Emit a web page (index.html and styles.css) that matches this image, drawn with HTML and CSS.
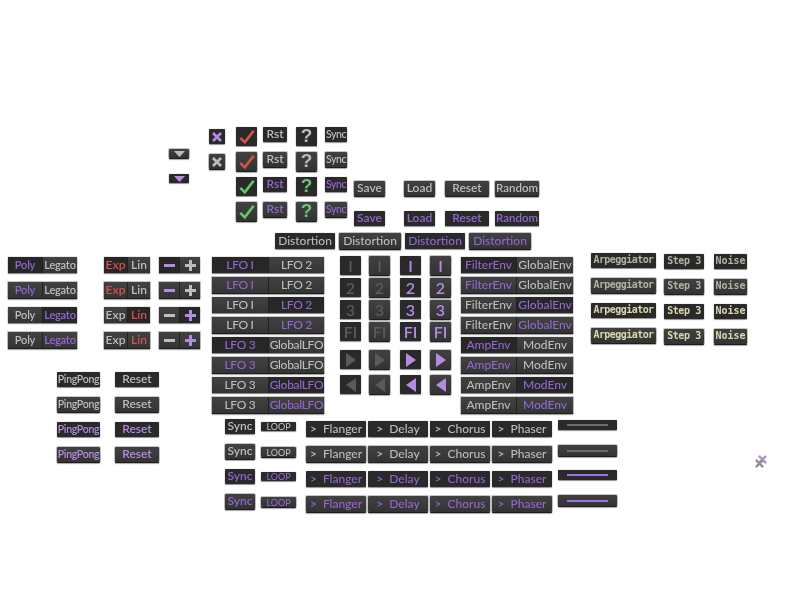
FILE: index.html
```html
<!DOCTYPE html>
<html lang="en">

<head>
    <meta charset="UTF-8">
    <meta name="viewport" content="width=device-width, initial-scale=1.0">
    <title>Synth button sprites</title>
    <link rel="stylesheet" href="styles.css">
</head>

<body>
    <svg class="defs" width="0" height="0">
        <symbol id="tick" viewBox="0 0 20 18"><path d="M2.5 10 L7.5 15 L17.5 2" fill="none" stroke="currentColor" stroke-width="3"/></symbol>
        <symbol id="cross" viewBox="0 0 10 10"><path d="M1 1 L9 9 M9 1 L1 9" fill="none" stroke="currentColor" stroke-width="2.6"/></symbol>
        <symbol id="down" viewBox="0 0 11 6"><path d="M0 0 H11 L5.5 6 Z" fill="currentColor"/></symbol>
        <symbol id="right" viewBox="0 0 10 14"><path d="M0 0 L10 7 L0 14 Z" fill="currentColor"/></symbol>
        <symbol id="left" viewBox="0 0 10 14"><path d="M10 0 L0 7 L10 14 Z" fill="currentColor"/></symbol>
        <symbol id="minus" viewBox="0 0 11 11"><path d="M0 4 H11 V7 H0 Z" fill="currentColor"/></symbol>
        <symbol id="plus" viewBox="0 0 11 11"><path d="M4 0 H7 V4 H11 V7 H7 V11 H4 V7 H0 V4 H4 Z" fill="currentColor"/></symbol>
    </svg>

    <div class="sheet">
        <!-- small drop arrows -->
        <div class="cluster arrows">
            <div class="btn up drop"><svg class="ico-down"><use href="#down"/></svg></div>
            <div class="btn drop pale"><svg class="ico-down"><use href="#down"/></svg></div>
        </div>

        <div class="cluster crosses">
            <div class="btn cross pale"><svg class="ico-cross"><use href="#cross"/></svg></div>
            <div class="btn up cross"><svg class="ico-cross"><use href="#cross"/></svg></div>
        </div>

        <!-- check / rst / help / sync -->
        <div class="cluster checks">
            <div class="btn square red"><svg class="ico-tick"><use href="#tick"/></svg></div>
            <div class="btn rst">Rst</div>
            <div class="btn square help">?</div>
            <div class="btn sync">Sync</div>

            <div class="btn up square red"><svg class="ico-tick"><use href="#tick"/></svg></div>
            <div class="btn up rst">Rst</div>
            <div class="btn up square help">?</div>
            <div class="btn up sync">Sync</div>

            <div class="btn square grn"><svg class="ico-tick"><use href="#tick"/></svg></div>
            <div class="btn rst pur">Rst</div>
            <div class="btn square help grn">?</div>
            <div class="btn sync pur">Sync</div>

            <div class="btn up square grn"><svg class="ico-tick"><use href="#tick"/></svg></div>
            <div class="btn up rst pur">Rst</div>
            <div class="btn up square help grn">?</div>
            <div class="btn up sync pur">Sync</div>
        </div>

        <div class="cluster files">
            <div class="btn up save">Save</div>
            <div class="btn up load">Load</div>
            <div class="btn up reset">Reset</div>
            <div class="btn up random">Random</div>
            <div class="btn save pur">Save</div>
            <div class="btn load pur">Load</div>
            <div class="btn reset pur">Reset</div>
            <div class="btn random pur">Random</div>
        </div>

        <div class="cluster dist">
            <div class="btn long">Distortion</div>
            <div class="btn up long">Distortion</div>
            <div class="btn long pur">Distortion</div>
            <div class="btn up long pur">Distortion</div>
        </div>

        <!-- two part switches -->
        <div class="cluster pairs voice">
            <div class="pair"><div class="part pur">Poly</div><div class="part lit">Legato</div></div>
            <div class="pair up"><div class="part lit pur">Poly</div><div class="part lit">Legato</div></div>
            <div class="pair"><div class="part lit">Poly</div><div class="part pur">Legato</div></div>
            <div class="pair up"><div class="part lit">Poly</div><div class="part lit pur">Legato</div></div>
        </div>

        <div class="cluster pairs curve">
            <div class="pair"><div class="part red">Exp</div><div class="part lit">Lin</div></div>
            <div class="pair up"><div class="part lit red">Exp</div><div class="part lit">Lin</div></div>
            <div class="pair"><div class="part lit">Exp</div><div class="part red">Lin</div></div>
            <div class="pair up"><div class="part lit">Exp</div><div class="part lit red">Lin</div></div>
        </div>

        <div class="cluster pairs steps">
            <div class="pair"><div class="part pale"><svg class="ico-sign"><use href="#minus"/></svg></div><div class="part lit"><svg class="ico-sign"><use href="#plus"/></svg></div></div>
            <div class="pair up"><div class="part lit pale"><svg class="ico-sign"><use href="#minus"/></svg></div><div class="part lit"><svg class="ico-sign"><use href="#plus"/></svg></div></div>
            <div class="pair"><div class="part lit"><svg class="ico-sign"><use href="#minus"/></svg></div><div class="part pale"><svg class="ico-sign"><use href="#plus"/></svg></div></div>
            <div class="pair up"><div class="part lit"><svg class="ico-sign"><use href="#minus"/></svg></div><div class="part lit pale"><svg class="ico-sign"><use href="#plus"/></svg></div></div>
        </div>

        <div class="cluster ping">
            <div class="btn pingpong">PingPong</div>
            <div class="btn reset">Reset</div>
            <div class="btn up pingpong">PingPong</div>
            <div class="btn up reset">Reset</div>
            <div class="btn pingpong pale">PingPong</div>
            <div class="btn reset pale">Reset</div>
            <div class="btn up pingpong pale">PingPong</div>
            <div class="btn up reset pale">Reset</div>
        </div>

        <div class="cluster pairs lfo">
            <div class="pair"><div class="part pur">LFO I</div><div class="part lit">LFO 2</div></div>
            <div class="pair up"><div class="part lit pur">LFO I</div><div class="part lit">LFO 2</div></div>
            <div class="pair"><div class="part lit">LFO I</div><div class="part pur">LFO 2</div></div>
            <div class="pair up"><div class="part lit">LFO I</div><div class="part lit pur">LFO 2</div></div>
            <div class="pair"><div class="part pur">LFO 3</div><div class="part lit">GlobalLFO</div></div>
            <div class="pair up"><div class="part lit pur">LFO 3</div><div class="part lit">GlobalLFO</div></div>
            <div class="pair"><div class="part lit">LFO 3</div><div class="part pur">GlobalLFO</div></div>
            <div class="pair up"><div class="part lit">LFO 3</div><div class="part lit pur">GlobalLFO</div></div>
        </div>

        <div class="cluster nums">
            <div class="btn num dim">I</div><div class="btn up num dim">I</div><div class="btn num pale">I</div><div class="btn up num pale">I</div>
            <div class="btn num dim">2</div><div class="btn up num dim">2</div><div class="btn num pale">2</div><div class="btn up num pale">2</div>
            <div class="btn num dim">3</div><div class="btn up num dim">3</div><div class="btn num pale">3</div><div class="btn up num pale">3</div>
            <div class="btn num dim">FI</div><div class="btn up num dim">FI</div><div class="btn num pale">FI</div><div class="btn up num pale">FI</div>
        </div>

        <div class="cluster play">
            <div class="btn num dim"><svg class="ico-play"><use href="#right"/></svg></div><div class="btn up num dim"><svg class="ico-play"><use href="#right"/></svg></div><div class="btn num pale"><svg class="ico-play"><use href="#right"/></svg></div><div class="btn up num pale"><svg class="ico-play"><use href="#right"/></svg></div>
            <div class="btn num dim"><svg class="ico-play"><use href="#left"/></svg></div><div class="btn up num dim"><svg class="ico-play"><use href="#left"/></svg></div><div class="btn num pale"><svg class="ico-play"><use href="#left"/></svg></div><div class="btn up num pale"><svg class="ico-play"><use href="#left"/></svg></div>
        </div>

        <div class="cluster pairs env">
            <div class="pair"><div class="part pur">FilterEnv</div><div class="part lit">GlobalEnv</div></div>
            <div class="pair up"><div class="part lit pur">FilterEnv</div><div class="part lit">GlobalEnv</div></div>
            <div class="pair"><div class="part lit">FilterEnv</div><div class="part pur">GlobalEnv</div></div>
            <div class="pair up"><div class="part lit">FilterEnv</div><div class="part lit pur">GlobalEnv</div></div>
            <div class="pair"><div class="part pur">AmpEnv</div><div class="part lit">ModEnv</div></div>
            <div class="pair up"><div class="part lit pur">AmpEnv</div><div class="part lit">ModEnv</div></div>
            <div class="pair"><div class="part lit">AmpEnv</div><div class="part pur">ModEnv</div></div>
            <div class="pair up"><div class="part lit">AmpEnv</div><div class="part lit pur">ModEnv</div></div>
        </div>

        <div class="cluster arps">
            <div class="btn mono arp">Arpeggiator</div><div class="btn mono stp">Step 3</div><div class="btn mono noise">Noise</div>
            <div class="btn up mono arp">Arpeggiator</div><div class="btn up mono stp">Step 3</div><div class="btn up mono noise">Noise</div>
            <div class="btn mono arp crm">Arpeggiator</div><div class="btn mono stp crm">Step 3</div><div class="btn mono noise crm">Noise</div>
            <div class="btn up mono arp crm">Arpeggiator</div><div class="btn up mono stp crm">Step 3</div><div class="btn up mono noise crm">Noise</div>
        </div>

        <!-- effects row -->
        <div class="cluster mods">
            <div class="btn msync">Sync</div><div class="btn loop">LOOP</div>
            <div class="btn fx">&gt; Flanger</div><div class="btn fx">&gt; Delay</div><div class="btn fx">&gt; Chorus</div><div class="btn fx">&gt; Phaser</div>
            <div class="btn slide"><span class="dash"></span></div>

            <div class="btn up msync">Sync</div><div class="btn up loop">LOOP</div>
            <div class="btn up fx">&gt; Flanger</div><div class="btn up fx">&gt; Delay</div><div class="btn up fx">&gt; Chorus</div><div class="btn up fx">&gt; Phaser</div>
            <div class="btn up slide"><span class="dash"></span></div>

            <div class="btn msync pur">Sync</div><div class="btn loop pur">LOOP</div>
            <div class="btn fx pur">&gt; Flanger</div><div class="btn fx pur">&gt; Delay</div><div class="btn fx pur">&gt; Chorus</div><div class="btn fx pur">&gt; Phaser</div>
            <div class="btn slide pur"><span class="dash"></span></div>

            <div class="btn up msync pur">Sync</div><div class="btn up loop pur">LOOP</div>
            <div class="btn up fx pur">&gt; Flanger</div><div class="btn up fx pur">&gt; Delay</div><div class="btn up fx pur">&gt; Chorus</div><div class="btn up fx pur">&gt; Phaser</div>
            <div class="btn up slide pur"><span class="dash"></span></div>
        </div>

        <div class="cluster stray">
            <svg class="stray-a"><use href="#cross"/></svg>
            <svg class="stray-b"><use href="#cross"/></svg>
        </div>
    </div>
</body>

</html>
```
FILE: styles.css
```css
html,
body {
    margin: 0;
    background-color: #fff;
}

.defs {
    position: absolute;
}

/* sprite sheet, every cluster sits at its own place on it */
.sheet {
    position: relative;
    width: 800px;
    height: 600px;
    overflow: hidden;
    font-family: Lato, "Liberation Sans", sans-serif;
    filter: blur(0.5px);
}

.cluster {
    position: absolute;
    display: grid;
    align-items: start;
    justify-items: start;
    grid-auto-rows: 25px;
}

.arrows { left: 169px; top: 149px; }
.crosses { left: 209px; top: 129px; }
.checks { left: 236px; top: 127px; grid-template-columns: 27px 33px 29px 22px; }
.files { left: 354px; top: 180px; grid-auto-rows: 30px; grid-template-columns: 50px 41px 50px 44px; }
.dist { left: 275px; top: 233px; grid-template-columns: 64px 66px 64px 61px; }
.voice { left: 8px; top: 257px; }
.curve { left: 104px; top: 257px; }
.steps { left: 159px; top: 257px; }
.ping { left: 57px; top: 372px; grid-template-columns: 58px 44px; }
.lfo { left: 212px; top: 257px; grid-auto-rows: 20px; }
.env { left: 461px; top: 257px; grid-auto-rows: 20px; }
.nums { left: 340px; top: 256px; grid-auto-rows: 22px; grid-template-columns: 29px 31px 30px 21px; }
.play { left: 340px; top: 350px; grid-template-columns: 29px 31px 30px 21px; }
.arps { left: 591px; top: 253px; grid-template-columns: 73px 50px 33px; }
.mods { left: 225px; top: 419px; grid-template-columns: 36px 45px 62px 62px 62px 66px 59px; }
.stray { left: 755px; top: 455px; }

/* base button */
.btn {
    display: flex;
    justify-content: center;
    align-items: center;
    box-sizing: border-box;
    width: 40px;
    height: 15px;
    padding-bottom: 2px;
    border-radius: 1px;
    background-color: #2a2a2a;
    color: #bdbdbd;
    font-size: 12px;
    font-weight: 600;
    box-shadow: 0 1px 1px rgba(0, 0, 0, 0.4), 0 0 1px rgba(0, 0, 0, 0.5);
}

.btn.up {
    background: linear-gradient(#414141, #333);
    box-shadow: 0 1px 0 #1e1e1e, 0 2px 1px rgba(0, 0, 0, 0.35), 0 0 0 1px rgba(90, 90, 90, 0.35);
}

.pur { color: #9466d0; }
.pale { color: #b48be2; }
.red { color: #d5514a; }
.grn { color: #66c768; }
.crm { color: #dcd6ae; }
.btn.dim { color: #5a5a5a; }

/* sizes */
.btn.drop { width: 20px; height: 9px; padding: 0; }
.btn.cross { width: 16px; height: 15px; padding: 0; }
.btn.square { width: 21px; height: 19px; padding: 0; }
.btn.help { padding-bottom: 1px; font-family: "Liberation Sans", sans-serif; font-size: 19px; font-weight: 700; }
.rst { width: 24px; }
.btn.sync { width: 22px; font-size: 10.5px; letter-spacing: -0.5px; }
.save { width: 31px; }
.load { width: 31px; }
.reset { width: 44px; }
.random { width: 44px; font-size: 11.5px; }
.files .btn { margin-top: 1px; }
.long { width: 60px; height: 16px; font-weight: 500; font-size: 12px; }
.btn.up.long { width: 62px; }
.btn.pingpong { width: 43px; font-size: 10.5px; letter-spacing: -0.3px; }
.btn.num { width: 21px; height: 19px; padding: 0; font-size: 16px; }
.mono {
    font-family: "DejaVu Sans Mono", "Liberation Mono", monospace;
    font-size: 10px;
    font-weight: 700;
    margin-top: 1px;
}
.btn.mono:not(.crm) { color: #b4b2a0; }
.arp { width: 65px; margin-top: 0; letter-spacing: -0.55px; }
.stp { width: 40px; letter-spacing: -0.4px; }
.noise { width: 33px; }
.msync { width: 30px; }
.btn.loop { width: 35px; height: 9px; padding: 0; margin-top: 3px; font-size: 9px; font-weight: 500; }
.btn.up.loop { height: 10px; }
.fx { width: 60px; height: 16px; margin-top: 2px; font-size: 12px; font-weight: 500; word-spacing: 3px; }
.btn.slide { width: 59px; height: 10px; padding: 0; margin-top: 1px; }
.btn.up.slide { height: 11px; }
.dash { width: 41px; height: 2px; background-color: #6c6c6c; }
.pur .dash { background-color: #a06fe0; }

/* two part switches */
.pair {
    display: flex;
    height: 16px;
    box-shadow: 0 1px 1px rgba(0, 0, 0, 0.4), 0 0 1px rgba(0, 0, 0, 0.5);
}

.pair.up {
    box-shadow: 0 1px 0 #1e1e1e, 0 2px 1px rgba(0, 0, 0, 0.35), 0 0 0 1px rgba(90, 90, 90, 0.35);
}

.part {
    display: flex;
    justify-content: center;
    align-items: center;
    padding-bottom: 1px;
    box-sizing: border-box;
    background-color: #272727;
    color: #bdbdbd;
    font-size: 12px;
    font-weight: 600;
}

.part + .part {
    border-left: 1px solid #222;
}

.part.lit {
    background: linear-gradient(#424242, #343434);
}

.part.pur { color: #9466d0; }
.part.red { color: #d5514a; }
.part.pale { color: #b48be2; }

.voice .part { width: 34px; font-size: 11px; letter-spacing: -0.2px; }
.voice .part + .part { width: 35px; }
.curve .part { width: 23px; }
.steps .part { width: 20px; padding: 0; }
.steps .part + .part { width: 21px; }
.lfo .part { width: 56px; font-size: 12px; font-weight: 500; letter-spacing: -0.3px; }
.env .part { width: 55px; font-size: 12px; font-weight: 500; }
.env .part + .part { width: 57px; }

/* icons */
.ico-down { width: 11px; height: 6px; }
.ico-cross { width: 10px; height: 10px; }
.ico-tick { width: 18px; height: 16px; }
.ico-play { width: 10px; height: 14px; }
.ico-sign { width: 11px; height: 11px; }

.stray-a,
.stray-b {
    position: absolute;
    width: 9px;
    height: 9px;
}

.stray-a { left: 3px; top: 0; color: #b38ee0; }
.stray-b { left: 0; top: 4px; color: #8f8f8f; }
```
